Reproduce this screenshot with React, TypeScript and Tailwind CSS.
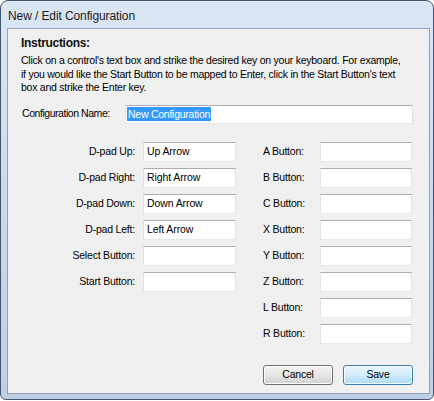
import React from "react";

const font = { fontFamily: '"Liberation Sans", Arial, sans-serif' };

function TextBox({ value, className = "" }: { value?: string; className?: string }) {
  return (
    <div
      className={`h-[20px] bg-white border border-t-[#abadb3] border-x-[#dfe3ea] border-b-[#e3e9ef] pl-[3px] flex items-center text-[10.5px] tracking-[-0.1px] text-black whitespace-nowrap ${className}`}
    >
      {value}
    </div>
  );
}

const leftRows = [
  ["D-pad Up:", "Up Arrow"],
  ["D-pad Right:", "Right Arrow"],
  ["D-pad Down:", "Down Arrow"],
  ["D-pad Left:", "Left Arrow"],
  ["Select Button:", ""],
  ["Start Button:", ""],
];

const rightRows = ["A", "B", "C", "X", "Y", "Z", "L", "R"];

export default function App() {
  return (
    <div className="bg-white w-[434px] h-[401px]" style={font}>
      <div className="w-[434px] h-[400px] border border-[#45546a] rounded-t-[8px] rounded-b-[6px] bg-gradient-to-b from-[#dbe6f3] via-[#cbdaec] to-[#bdd0e6] pl-[6px] pr-[3px] pt-[27px] pb-[5px] relative">
        <div className="absolute left-[7px] top-[6px] text-[12px] text-[#1a1a1a] tracking-[-0.1px]">
          New / Edit Configuration
        </div>
        <div className="h-full border border-[#8fa1b8] bg-[#f0f0f0] flex flex-col text-black">
          <div className="pl-[13px] pt-[8px]">
            <div className="text-[12px] font-bold leading-[13px] tracking-[-0.3px] text-[#111]">
              Instructions:
            </div>
            <div className="mt-[4px] text-[10.5px] leading-[13.5px] tracking-[-0.25px] whitespace-nowrap">
              Click on a control's text box and strike the desired key on your keyboard. For example,
              <br />
              if you would like the Start Button to be mapped to Enter, click in the Start Button's text
              <br />
              box and strike the Enter key.
            </div>
          </div>

          <div className="mt-[10px] pl-[14px] flex items-center">
            <div className="w-[103px] text-[10.5px] tracking-[-0.45px]">Configuration Name:</div>
            <div className="w-[288px] h-[19px] bg-white border border-t-[#abadb3] border-x-[#dfe3ea] border-b-[#e3e9ef] pl-[1px] flex items-center">
              <span className="bg-[#3399ff] text-white text-[10.5px] tracking-[-0.25px] leading-[14px] px-[1px]">
                New Configuration
              </span>
            </div>
          </div>

          <div className="mt-[18px] flex">
            <div className="grid grid-cols-[127px_93px] gap-x-[8px] gap-y-[6px] content-start">
              {leftRows.map(([label, value]) => (
                <React.Fragment key={label}>
                  <div className="h-[20px] flex items-center justify-end text-[10.5px] tracking-[-0.2px]">
                    {label}
                  </div>
                  <TextBox value={value} />
                </React.Fragment>
              ))}
            </div>
            <div className="ml-[27px] grid grid-cols-[57px_92px] gap-y-[6px] content-start">
              {rightRows.map((k) => (
                <React.Fragment key={k}>
                  <div className="h-[20px] flex items-center text-[10.5px] tracking-[-0.2px]">
                    {k} Button:
                  </div>
                  <TextBox />
                </React.Fragment>
              ))}
            </div>
          </div>

          <div className="mt-[21px] pr-[16px] flex justify-end gap-[10px]">
            <button className="w-[70px] h-[20px] rounded-[3px] border border-[#707070] bg-gradient-to-b from-[#f4f4f4] via-[#e6e6e6] to-[#d0d0d0] text-[10.5px] tracking-[-0.2px] text-black shadow-[inset_0_0_0_1px_#fcfcfc]">
              Cancel
            </button>
            <button className="w-[70px] h-[20px] rounded-[3px] border border-[#3c7fb1] bg-gradient-to-b from-[#eaf6fd] via-[#d3ecfb] to-[#a9dbf6] text-[10.5px] tracking-[-0.2px] text-black shadow-[inset_0_0_0_1px_#f4fbff]">
              Save
            </button>
          </div>
        </div>
      </div>
    </div>
  );
}
